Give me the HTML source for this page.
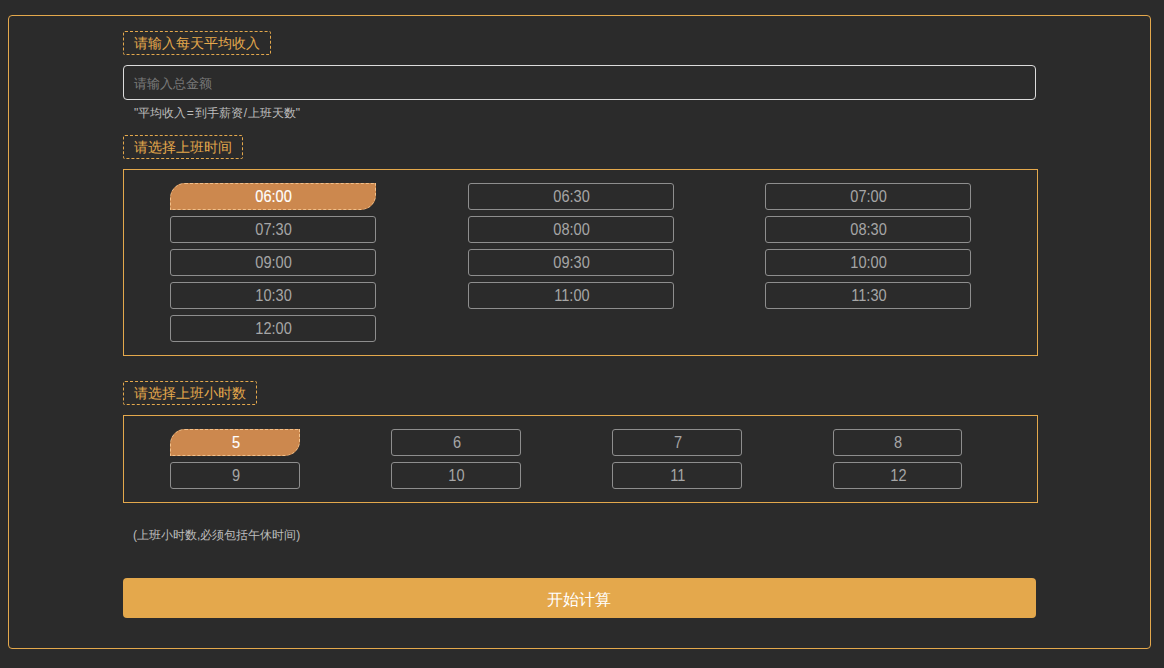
<!DOCTYPE html>
<html>
<head>
<meta charset="utf-8">
<style>
html,body{margin:0;padding:0;}
body{width:1164px;height:668px;background:#2b2b2b;position:relative;overflow:hidden;font-family:"Liberation Sans",sans-serif;}
.a{position:absolute;box-sizing:border-box;}
.outer{left:8px;top:15px;width:1143px;height:634px;border:1px solid #e4a84c;border-radius:4px;}
.lbl{height:24px;border:1px dashed #e4a84c;color:#e4a84c;font-size:14px;line-height:22px;padding:0 10px;white-space:nowrap;border-radius:2px;}
.inp{left:123px;top:65px;width:913px;height:35px;border:1px solid #dcdcdc;border-radius:4px;color:#7a7a7a;font-size:13px;line-height:35px;padding-left:10px;}
.hint{color:#bdbdbd;font-size:12px;line-height:16px;white-space:nowrap;}
.box{left:123px;width:915px;border:1px solid #e4a84c;}
.b{height:27px;border:1px solid #8e8e8e;border-radius:3px;color:#a6a6a6;font-size:16px;line-height:26px;text-align:center;}
.b span{display:inline-block;transform:translateX(0.5px) scaleX(0.91);letter-spacing:0px;}
.sel{border:1px dashed #f2c08a;border-radius:15px 0 15px 0;background:#cc884e;color:#fff;}
.sel span{-webkit-text-stroke:0.15px #fff;}
.calc{left:123px;top:578px;width:913px;height:40px;background:#e4a84c;border-radius:4px;color:#fff;font-size:16px;line-height:43px;padding-right:2px;text-align:center;}
</style>
</head>
<body>
<div class="a outer"></div>
<div class="a lbl" style="left:123px;top:31px;">请输入每天平均收入</div>
<div class="a inp">请输入总金额</div>
<div class="a hint" style="left:134px;top:105px;">"平均收入<span style="margin:0 1px 0 0.5px">=</span>到手薪资<span style="margin:0 0.5px 0 1px">/</span>上班天数"</div>
<div class="a lbl" style="left:123px;top:135px;">请选择上班时间</div>
<div class="a box" style="top:169px;height:187px;"></div>
<div class="a b sel" style="left:170px;top:183px;width:206px;"><span>06:00</span></div>
<div class="a b" style="left:468px;top:183px;width:206px;"><span>06:30</span></div>
<div class="a b" style="left:765px;top:183px;width:206px;"><span>07:00</span></div>
<div class="a b" style="left:170px;top:216px;width:206px;"><span>07:30</span></div>
<div class="a b" style="left:468px;top:216px;width:206px;"><span>08:00</span></div>
<div class="a b" style="left:765px;top:216px;width:206px;"><span>08:30</span></div>
<div class="a b" style="left:170px;top:249px;width:206px;"><span>09:00</span></div>
<div class="a b" style="left:468px;top:249px;width:206px;"><span>09:30</span></div>
<div class="a b" style="left:765px;top:249px;width:206px;"><span>10:00</span></div>
<div class="a b" style="left:170px;top:282px;width:206px;"><span>10:30</span></div>
<div class="a b" style="left:468px;top:282px;width:206px;"><span>11:00</span></div>
<div class="a b" style="left:765px;top:282px;width:206px;"><span>11:30</span></div>
<div class="a b" style="left:170px;top:315px;width:206px;"><span>12:00</span></div>
<div class="a lbl" style="left:123px;top:381px;">请选择上班小时数</div>
<div class="a box" style="top:415px;height:88px;"></div>
<div class="a b sel" style="left:170px;top:429px;width:130px;"><span>5</span></div>
<div class="a b" style="left:391px;top:429px;width:130px;"><span>6</span></div>
<div class="a b" style="left:612px;top:429px;width:130px;"><span>7</span></div>
<div class="a b" style="left:833px;top:429px;width:129px;"><span>8</span></div>
<div class="a b" style="left:170px;top:462px;width:130px;"><span>9</span></div>
<div class="a b" style="left:391px;top:462px;width:130px;"><span>10</span></div>
<div class="a b" style="left:612px;top:462px;width:130px;"><span>11</span></div>
<div class="a b" style="left:833px;top:462px;width:129px;"><span>12</span></div>
<div class="a hint" style="left:133px;top:527px;">(上班小时数,必须包括午休时间)</div>
<div class="a calc">开始计算</div>
</body>
</html>
